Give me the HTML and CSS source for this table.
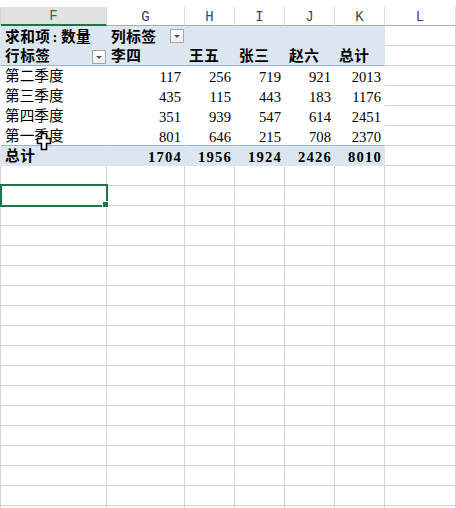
FILE: index.html
```html
<!DOCTYPE html>
<html lang="zh-CN">
<head>
<meta charset="utf-8">
<title>数据透视表</title>
<link rel="stylesheet" href="styles.css">
</head>
<body>
<div class="sheet">
  <div class="top-strip"></div>
  <div class="row colhead">
    <div class="ch sel">F</div>
    <div class="ch">G</div>
    <div class="ch">H</div>
    <div class="ch">I</div>
    <div class="ch">J</div>
    <div class="ch">K</div>
    <div class="ch">L</div>
  </div>

  <div class="row pv-row first">
    <div class="c pv blue b">求和项<span class="colon">:</span>数量</div>
    <div class="c pv blue b split">列标签<span class="dd"></span></div>
    <div class="c pv blue"></div>
    <div class="c pv blue"></div>
    <div class="c pv blue"></div>
    <div class="c pv blue"></div>
    <div class="c"></div>
  </div>

  <div class="row pv-row">
    <div class="c pv blue b split line">行标签<span class="dd"></span></div>
    <div class="c pv blue b line">李四</div>
    <div class="c pv blue b line">王五</div>
    <div class="c pv blue b line">张三</div>
    <div class="c pv blue b line">赵六</div>
    <div class="c pv blue b line">总计</div>
    <div class="c"></div>
  </div>

  <div class="row pv-row white">
    <div class="c pv">第二季度</div>
    <div class="c pv num">117</div>
    <div class="c pv num">256</div>
    <div class="c pv num">719</div>
    <div class="c pv num">921</div>
    <div class="c pv num">2013</div>
    <div class="c"></div>
  </div>
  <div class="row pv-row white">
    <div class="c pv">第三季度</div>
    <div class="c pv num">435</div>
    <div class="c pv num">115</div>
    <div class="c pv num">443</div>
    <div class="c pv num">183</div>
    <div class="c pv num">1176</div>
    <div class="c"></div>
  </div>
  <div class="row pv-row white">
    <div class="c pv">第四季度</div>
    <div class="c pv num">351</div>
    <div class="c pv num">939</div>
    <div class="c pv num">547</div>
    <div class="c pv num">614</div>
    <div class="c pv num">2451</div>
    <div class="c"></div>
  </div>
  <div class="row pv-row white">
    <div class="c pv line">第一季度</div>
    <div class="c pv num line">801</div>
    <div class="c pv num line">646</div>
    <div class="c pv num line">215</div>
    <div class="c pv num line">708</div>
    <div class="c pv num line">2370</div>
    <div class="c"></div>
  </div>

  <div class="row pv-row">
    <div class="c pv blue b">总计</div>
    <div class="c pv blue b num">1704</div>
    <div class="c pv blue b num">1956</div>
    <div class="c pv blue b num">1924</div>
    <div class="c pv blue b num">2426</div>
    <div class="c pv blue b num">8010</div>
    <div class="c"></div>
  </div>

  <div class="row"><div class="c"></div><div class="c"></div><div class="c"></div><div class="c"></div><div class="c"></div><div class="c"></div><div class="c"></div></div>
  <div class="row"><div class="c"></div><div class="c"></div><div class="c"></div><div class="c"></div><div class="c"></div><div class="c"></div><div class="c"></div></div>
  <div class="row"><div class="c"></div><div class="c"></div><div class="c"></div><div class="c"></div><div class="c"></div><div class="c"></div><div class="c"></div></div>
  <div class="row"><div class="c"></div><div class="c"></div><div class="c"></div><div class="c"></div><div class="c"></div><div class="c"></div><div class="c"></div></div>
  <div class="row"><div class="c"></div><div class="c"></div><div class="c"></div><div class="c"></div><div class="c"></div><div class="c"></div><div class="c"></div></div>
  <div class="row"><div class="c"></div><div class="c"></div><div class="c"></div><div class="c"></div><div class="c"></div><div class="c"></div><div class="c"></div></div>
  <div class="row"><div class="c"></div><div class="c"></div><div class="c"></div><div class="c"></div><div class="c"></div><div class="c"></div><div class="c"></div></div>
  <div class="row"><div class="c"></div><div class="c"></div><div class="c"></div><div class="c"></div><div class="c"></div><div class="c"></div><div class="c"></div></div>
  <div class="row"><div class="c"></div><div class="c"></div><div class="c"></div><div class="c"></div><div class="c"></div><div class="c"></div><div class="c"></div></div>
  <div class="row"><div class="c"></div><div class="c"></div><div class="c"></div><div class="c"></div><div class="c"></div><div class="c"></div><div class="c"></div></div>
  <div class="row"><div class="c"></div><div class="c"></div><div class="c"></div><div class="c"></div><div class="c"></div><div class="c"></div><div class="c"></div></div>
  <div class="row"><div class="c"></div><div class="c"></div><div class="c"></div><div class="c"></div><div class="c"></div><div class="c"></div><div class="c"></div></div>
  <div class="row"><div class="c"></div><div class="c"></div><div class="c"></div><div class="c"></div><div class="c"></div><div class="c"></div><div class="c"></div></div>
  <div class="row"><div class="c"></div><div class="c"></div><div class="c"></div><div class="c"></div><div class="c"></div><div class="c"></div><div class="c"></div></div>
  <div class="row"><div class="c"></div><div class="c"></div><div class="c"></div><div class="c"></div><div class="c"></div><div class="c"></div><div class="c"></div></div>
  <div class="row"><div class="c"></div><div class="c"></div><div class="c"></div><div class="c"></div><div class="c"></div><div class="c"></div><div class="c"></div></div>
  <div class="row"><div class="c"></div><div class="c"></div><div class="c"></div><div class="c"></div><div class="c"></div><div class="c"></div><div class="c"></div></div>
  <div class="row"><div class="c"></div><div class="c"></div><div class="c"></div><div class="c"></div><div class="c"></div><div class="c"></div><div class="c"></div></div>

  <div class="selection"><span class="handle"></span></div>
  <svg class="cursor" width="16" height="19" viewBox="0 0 16 19">
    <path d="M5.5 1.5 H10.5 V6.5 H14.5 V11.5 H10.5 V17.5 H5.5 V11.5 H1.5 V6.5 H5.5 Z" fill="#fff" stroke="#000" stroke-width="1.6" stroke-linejoin="miter"/>
  </svg>
</div>
</body>
</html>
```
FILE: styles.css
```css
html, body {
  margin: 0;
  padding: 0;
  background: #fff;
  overflow: hidden;
}

.sheet {
  position: relative;
  width: 456px;
  height: 508px;
  overflow: hidden;
  font-family: "Liberation Serif", "Noto Sans CJK SC", serif;
  font-size: 14.67px;
  color: #000;
}

.top-strip {
  height: 7px;
  background: #fff;
}

.row {
  display: grid;
  grid-template-columns: 106px 78px 50px 50px 50px 50px 71px;
  border-left: 1px solid #d4d4d4;
}

.pv-row {
  border-left-color: #dce6f1;
}

.pv-row.white {
  border-left-color: #fff;
}

/* column header row */
.colhead {
  height: 19px;
  border-left-color: #d4d4d4;
}

.ch {
  box-sizing: border-box;
  height: 19px;
  border-right: 1px solid #dadada;
  border-bottom: 1px solid #ababab;
  font-family: "Liberation Mono", monospace;
  font-size: 14px;
  line-height: 19px;
  text-align: center;
  color: #444;
  padding-top: 1px;
}

.ch.sel {
  background: #e1e1e1;
  color: #217346;
  border-bottom: 2px solid #217346;
  line-height: 17px;
}

/* body cells */
.c {
  box-sizing: border-box;
  height: 20px;
  border-right: 1px solid #d4d4d4;
  border-bottom: 1px solid #d4d4d4;
  line-height: 19px;
  padding: 1px 3px 0 4px;
  white-space: nowrap;
  overflow: hidden;
}

.first .c {
  padding-top: 2px;
}

.pv {
  border-right-color: transparent;
  border-bottom-color: transparent;
  background: #fff;
}

.blue {
  background: #dce6f1;
}

.pv.line {
  border-bottom-color: #95b3d7;
}

.b {
  font-weight: bold;
  letter-spacing: 0.5px;
}

.colon {
  margin: 0 3px 0 2px;
}

.num {
  text-align: right;
  padding-top: 2px;
  line-height: 18px;
}

.b.num {
  letter-spacing: 1.2px;
  padding-right: 2px;
}

.split {
  display: flex;
  justify-content: space-between;
  align-items: flex-start;
  padding-right: 0;
}

.first .split,
.split {
  padding-top: 0;
}

.split {
  line-height: 20px;
}

.first .split {
  line-height: 22px;
}

.dd {
  box-sizing: border-box;
  flex: none;
  width: 14px;
  height: 14px;
  margin-top: 4px;
  border: 1px solid #a6a6a6;
  background: linear-gradient(#ffffff, #ececec);
  position: relative;
}

.first .dd {
  margin-top: 3px;
}

.dd::after {
  content: "";
  position: absolute;
  left: 3px;
  top: 5px;
  border-left: 3px solid transparent;
  border-right: 3px solid transparent;
  border-top: 3px solid #555;
}

/* active cell selection */
.selection {
  position: absolute;
  left: 0;
  top: 184px;
  width: 108px;
  height: 23px;
  box-sizing: border-box;
  border: 2px solid #217346;
}

.handle {
  position: absolute;
  right: -3px;
  bottom: -3px;
  width: 5px;
  height: 5px;
  background: #217346;
  border: 1px solid #fff;
}

.cursor {
  position: absolute;
  left: 36px;
  top: 132px;
}
```
